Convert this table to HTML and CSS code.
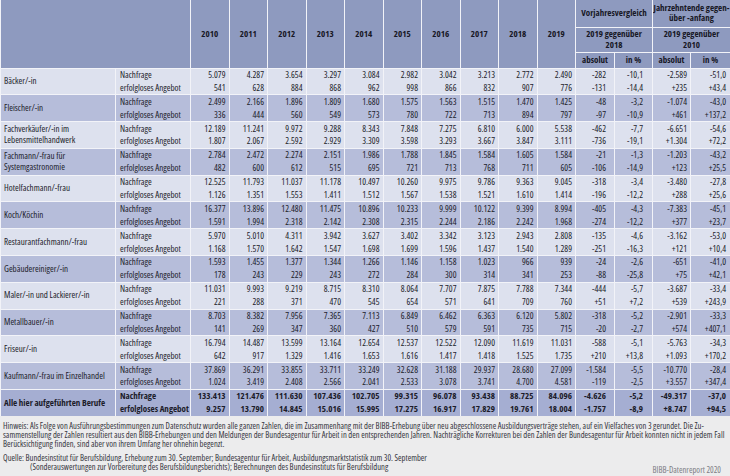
FILE: index.html
```html
<!DOCTYPE html>
<html lang="de">
<head>
<meta charset="utf-8">
<title>Nachfrage und erfolgloses Angebot</title>
<link rel="stylesheet" href="styles.css">
</head>
<body>
<table class="t">
<colgroup>
<col class="c-lab"><col class="c-typ">
<col class="c-y"><col class="c-y"><col class="c-y"><col class="c-y"><col class="c-y">
<col class="c-y"><col class="c-y"><col class="c-y"><col class="c-y"><col class="c-y">
<col class="c-a1"><col class="c-p1"><col class="c-a2"><col class="c-p2">
</colgroup>
<thead>
<tr class="h1">
<th colspan="2" rowspan="3"></th>
<th rowspan="3">2010</th><th rowspan="3">2011</th><th rowspan="3">2012</th><th rowspan="3">2013</th><th rowspan="3">2014</th>
<th rowspan="3">2015</th><th rowspan="3">2016</th><th rowspan="3">2017</th><th rowspan="3">2018</th><th rowspan="3">2019</th>
<th colspan="2">Vorjahresvergleich</th>
<th colspan="2">Jahrzehntende gegen-<br>über -anfang</th>
</tr>
<tr class="h2">
<th colspan="2">2019 gegenüber<br>2018</th>
<th colspan="2">2019 gegenüber<br>2010</th>
</tr>
<tr class="h3">
<th>absolut</th><th>in %</th><th>absolut</th><th>in %</th>
</tr>
</thead>
<tbody>
<tr class="lt g"><td class="lab" rowspan="2">Bäcker/-in</td><td class="typ">Nachfrage</td><td>5.079</td><td>4.287</td><td>3.654</td><td>3.297</td><td>3.084</td><td>2.982</td><td>3.042</td><td>3.213</td><td>2.772</td><td>2.490</td><td class="a1">-282</td><td class="p1">-10,1</td><td class="a2">-2.589</td><td class="p2">-51,0</td></tr>
<tr class="lt"><td class="typ">erfolgloses Angebot</td><td>541</td><td>628</td><td>884</td><td>868</td><td>962</td><td>998</td><td>866</td><td>832</td><td>907</td><td>776</td><td class="a1">-131</td><td class="p1">-14,4</td><td class="a2">+235</td><td class="p2">+43,4</td></tr>

<tr class="dk g"><td class="lab" rowspan="2">Fleischer/-in</td><td class="typ">Nachfrage</td><td>2.499</td><td>2.166</td><td>1.896</td><td>1.809</td><td>1.680</td><td>1.575</td><td>1.563</td><td>1.515</td><td>1.470</td><td>1.425</td><td class="a1">-48</td><td class="p1">-3,2</td><td class="a2">-1.074</td><td class="p2">-43,0</td></tr>
<tr class="dk"><td class="typ">erfolgloses Angebot</td><td>336</td><td>444</td><td>560</td><td>549</td><td>573</td><td>780</td><td>722</td><td>713</td><td>894</td><td>797</td><td class="a1">-97</td><td class="p1">-10,9</td><td class="a2">+461</td><td class="p2">+137,2</td></tr>

<tr class="lt g"><td class="lab" rowspan="2">Fachverkäufer/-in im<br>Lebensmittelhandwerk</td><td class="typ">Nachfrage</td><td>12.189</td><td>11.241</td><td>9.972</td><td>9.288</td><td>8.343</td><td>7.848</td><td>7.275</td><td>6.810</td><td>6.000</td><td>5.538</td><td class="a1">-462</td><td class="p1">-7,7</td><td class="a2">-6.651</td><td class="p2">-54,6</td></tr>
<tr class="lt"><td class="typ">erfolgloses Angebot</td><td>1.807</td><td>2.067</td><td>2.592</td><td>2.929</td><td>3.309</td><td>3.598</td><td>3.293</td><td>3.667</td><td>3.847</td><td>3.111</td><td class="a1">-736</td><td class="p1">-19,1</td><td class="a2">+1.304</td><td class="p2">+72,2</td></tr>

<tr class="dk g"><td class="lab" rowspan="2">Fachmann/-frau für<br>Systemgastronomie</td><td class="typ">Nachfrage</td><td>2.784</td><td>2.472</td><td>2.274</td><td>2.151</td><td>1.986</td><td>1.788</td><td>1.845</td><td>1.584</td><td>1.605</td><td>1.584</td><td class="a1">-21</td><td class="p1">-1,3</td><td class="a2">-1.203</td><td class="p2">-43,2</td></tr>
<tr class="dk"><td class="typ">erfolgloses Angebot</td><td>482</td><td>600</td><td>612</td><td>515</td><td>695</td><td>721</td><td>713</td><td>768</td><td>711</td><td>605</td><td class="a1">-106</td><td class="p1">-14,9</td><td class="a2">+123</td><td class="p2">+25,5</td></tr>

<tr class="lt g"><td class="lab" rowspan="2">Hotelfachmann/-frau</td><td class="typ">Nachfrage</td><td>12.525</td><td>11.793</td><td>11.037</td><td>11.178</td><td>10.497</td><td>10.260</td><td>9.975</td><td>9.786</td><td>9.363</td><td>9.045</td><td class="a1">-318</td><td class="p1">-3,4</td><td class="a2">-3.480</td><td class="p2">-27,8</td></tr>
<tr class="lt"><td class="typ">erfolgloses Angebot</td><td>1.126</td><td>1.351</td><td>1.553</td><td>1.411</td><td>1.512</td><td>1.567</td><td>1.538</td><td>1.521</td><td>1.610</td><td>1.414</td><td class="a1">-196</td><td class="p1">-12,2</td><td class="a2">+288</td><td class="p2">+25,6</td></tr>

<tr class="dk g"><td class="lab" rowspan="2">Koch/Köchin</td><td class="typ">Nachfrage</td><td>16.377</td><td>13.896</td><td>12.480</td><td>11.475</td><td>10.896</td><td>10.233</td><td>9.999</td><td>10.122</td><td>9.399</td><td>8.994</td><td class="a1">-405</td><td class="p1">-4,3</td><td class="a2">-7.383</td><td class="p2">-45,1</td></tr>
<tr class="dk"><td class="typ">erfolgloses Angebot</td><td>1.591</td><td>1.994</td><td>2.318</td><td>2.142</td><td>2.308</td><td>2.315</td><td>2.244</td><td>2.186</td><td>2.242</td><td>1.968</td><td class="a1">-274</td><td class="p1">-12,2</td><td class="a2">+377</td><td class="p2">+23,7</td></tr>

<tr class="lt g"><td class="lab" rowspan="2">Restaurantfachmann/-frau</td><td class="typ">Nachfrage</td><td>5.970</td><td>5.010</td><td>4.311</td><td>3.942</td><td>3.627</td><td>3.402</td><td>3.342</td><td>3.123</td><td>2.943</td><td>2.808</td><td class="a1">-135</td><td class="p1">-4,6</td><td class="a2">-3.162</td><td class="p2">-53,0</td></tr>
<tr class="lt"><td class="typ">erfolgloses Angebot</td><td>1.168</td><td>1.570</td><td>1.642</td><td>1.547</td><td>1.698</td><td>1.699</td><td>1.596</td><td>1.437</td><td>1.540</td><td>1.289</td><td class="a1">-251</td><td class="p1">-16,3</td><td class="a2">+121</td><td class="p2">+10,4</td></tr>

<tr class="dk g"><td class="lab" rowspan="2">Gebäudereiniger/-in</td><td class="typ">Nachfrage</td><td>1.593</td><td>1.455</td><td>1.377</td><td>1.344</td><td>1.266</td><td>1.146</td><td>1.158</td><td>1.023</td><td>966</td><td>939</td><td class="a1">-24</td><td class="p1">-2,6</td><td class="a2">-651</td><td class="p2">-41,0</td></tr>
<tr class="dk"><td class="typ">erfolgloses Angebot</td><td>178</td><td>243</td><td>229</td><td>243</td><td>272</td><td>284</td><td>300</td><td>314</td><td>341</td><td>253</td><td class="a1">-88</td><td class="p1">-25,8</td><td class="a2">+75</td><td class="p2">+42,1</td></tr>

<tr class="lt g"><td class="lab" rowspan="2">Maler/-in und Lackierer/-in</td><td class="typ">Nachfrage</td><td>11.031</td><td>9.993</td><td>9.219</td><td>8.715</td><td>8.310</td><td>8.064</td><td>7.707</td><td>7.875</td><td>7.788</td><td>7.344</td><td class="a1">-444</td><td class="p1">-5,7</td><td class="a2">-3.687</td><td class="p2">-33,4</td></tr>
<tr class="lt"><td class="typ">erfolgloses Angebot</td><td>221</td><td>288</td><td>371</td><td>470</td><td>545</td><td>654</td><td>571</td><td>641</td><td>709</td><td>760</td><td class="a1">+51</td><td class="p1">+7,2</td><td class="a2">+539</td><td class="p2">+243,9</td></tr>

<tr class="dk g"><td class="lab" rowspan="2">Metallbauer/-in</td><td class="typ">Nachfrage</td><td>8.703</td><td>8.382</td><td>7.956</td><td>7.365</td><td>7.113</td><td>6.849</td><td>6.462</td><td>6.363</td><td>6.120</td><td>5.802</td><td class="a1">-318</td><td class="p1">-5,2</td><td class="a2">-2.901</td><td class="p2">-33,3</td></tr>
<tr class="dk"><td class="typ">erfolgloses Angebot</td><td>141</td><td>269</td><td>347</td><td>360</td><td>427</td><td>510</td><td>579</td><td>591</td><td>735</td><td>715</td><td class="a1">-20</td><td class="p1">-2,7</td><td class="a2">+574</td><td class="p2">+407,1</td></tr>

<tr class="lt g"><td class="lab" rowspan="2">Friseur/-in</td><td class="typ">Nachfrage</td><td>16.794</td><td>14.487</td><td>13.599</td><td>13.164</td><td>12.654</td><td>12.537</td><td>12.522</td><td>12.090</td><td>11.619</td><td>11.031</td><td class="a1">-588</td><td class="p1">-5,1</td><td class="a2">-5.763</td><td class="p2">-34,3</td></tr>
<tr class="lt"><td class="typ">erfolgloses Angebot</td><td>642</td><td>917</td><td>1.329</td><td>1.416</td><td>1.653</td><td>1.616</td><td>1.417</td><td>1.418</td><td>1.525</td><td>1.735</td><td class="a1">+210</td><td class="p1">+13,8</td><td class="a2">+1.093</td><td class="p2">+170,2</td></tr>

<tr class="dk g"><td class="lab" rowspan="2">Kaufmann/-frau im Einzelhandel</td><td class="typ">Nachfrage</td><td>37.869</td><td>36.291</td><td>33.855</td><td>33.711</td><td>33.249</td><td>32.628</td><td>31.188</td><td>29.937</td><td>28.680</td><td>27.099</td><td class="a1">-1.584</td><td class="p1">-5,5</td><td class="a2">-10.770</td><td class="p2">-28,4</td></tr>
<tr class="dk"><td class="typ">erfolgloses Angebot</td><td>1.024</td><td>3.419</td><td>2.408</td><td>2.566</td><td>2.041</td><td>2.533</td><td>3.078</td><td>3.741</td><td>4.700</td><td>4.581</td><td class="a1">-119</td><td class="p1">-2,5</td><td class="a2">+3.557</td><td class="p2">+347,4</td></tr>

<tr class="tot g"><td class="lab" rowspan="2">Alle hier aufgeführten Berufe</td><td class="typ">Nachfrage</td><td>133.413</td><td>121.476</td><td>111.630</td><td>107.436</td><td>102.705</td><td>99.315</td><td>96.078</td><td>93.438</td><td>88.725</td><td>84.096</td><td class="a1">-4.626</td><td class="p1">-5,2</td><td class="a2">-49.317</td><td class="p2">-37,0</td></tr>
<tr class="tot"><td class="typ">erfolgloses Angebot</td><td>9.257</td><td>13.790</td><td>14.845</td><td>15.016</td><td>15.995</td><td>17.275</td><td>16.917</td><td>17.829</td><td>19.761</td><td>18.004</td><td class="a1">-1.757</td><td class="p1">-8,9</td><td class="a2">+8.747</td><td class="p2">+94,5</td></tr>
</tbody>
</table>

<div class="foot">
<p class="note"><span>Hinweis: Als Folge von Ausführungsbestimmungen zum Datenschutz wurden alle ganzen Zahlen, die im Zusammenhang mit der BIBB-Erhebung über neu abgeschlossene Ausbildungsverträge stehen, auf ein Vielfaches von 3 gerundet. Die Zu-</span><span>sammenstellung der Zahlen resultiert aus den BIBB-Erhebungen und den Meldungen der Bundesagentur für Arbeit in den entsprechenden Jahren. Nachträgliche Korrekturen bei den Zahlen der Bundesagentur für Arbeit konnten nicht in jedem Fall</span><span>Berücksichtigung finden, sind aber von ihrem Umfang her ohnehin begenzt.</span></p>
<div class="src-row">
<p class="src"><span>Quelle: Bundesinstitut für Berufsbildung, Erhebung zum 30. September; Bundesagentur für Arbeit, Ausbildungsmarktstatistik zum 30. September</span><span class="ind">(Sonderauswertungen zur Vorbereitung des Berufsbildungsberichts); Berechnungen des Bundesinstituts für Berufsbildung</span></p>
<p class="credit">BIBB-Datenreport 2020</p>
</div>
</div>
</body>
</html>
```

FILE: styles.css
```css
html, body {
  margin: 0;
  padding: 0;
}
body {
  width: 730px;
  height: 476px;
  overflow: hidden;
  background: #ececed;
  font-family: "Open Sans", "Liberation Sans", sans-serif;
  font-stretch: 87%;
  font-variation-settings: "wdth" 87;
  color: #1c1c2a;
}
.t {
  width: 730px;
  border-collapse: collapse;
  table-layout: fixed;
  font-size: 9px;
}
.c-lab { width: 115px; }
.c-typ { width: 75px; }
.c-y { width: 38.5px; }
.c-a1 { width: 39px; }
.c-p1 { width: 38px; }
.c-a2 { width: 38px; }
.c-p2 { width: 40px; }

.t th,
.t td {
  padding: 0;
  border-left: 1px solid #f2f3f8;
  border-right: 1px solid #f2f3f8;
  white-space: nowrap;
  overflow: hidden;
}
.t th {
  background: #8e9abf;
  font-weight: bold;
  text-align: center;
  vertical-align: middle;
  line-height: 10.5px;
  color: #181826;
}
.h1 { height: 27px; }
.h2 { height: 25px; }
.h3 { height: 16px; }
.h1 th, .h2 th, .h3 th { border-bottom: 1px solid #f2f3f8; }

.t tbody tr { height: 13.4px; }
.t td {
  text-align: right;
  padding-right: 3px;
  line-height: 12px;
  vertical-align: middle;
}
.t tr.g td { border-top: 1px solid #f2f3f8; }
.t td.lab {
  text-align: left;
  padding-left: 3px;
  padding-right: 0;
  line-height: 10.5px;
}
.t td.typ {
  text-align: left;
  padding-left: 4px;
  padding-right: 0;
}
.t td.a1 { padding-right: 8px; }
.t td.p1 { padding-right: 9px; }
.t td.a2 { padding-right: 3px; }
.t td.p2 { padding-right: 4px; }

.lt td { background: #dde1ee; }
.dk td { background: #b6bdda; }
.tot td { background: #a5aed2; font-weight: bold; }

.foot {
  padding: 6px 3px 0 3px;
  font-size: 8.55px;
  line-height: 9px;
  color: #35353d;
}
.foot p { margin: 0; }
.foot span { display: block; white-space: nowrap; }
.src-row {
  display: flex;
  justify-content: space-between;
  align-items: flex-end;
  margin-top: 5px;
}
.src .ind { padding-left: 27px; }
.credit {
  color: #7c7c84;
  padding-right: 6px;
  transform: translateY(3px);
}
```
